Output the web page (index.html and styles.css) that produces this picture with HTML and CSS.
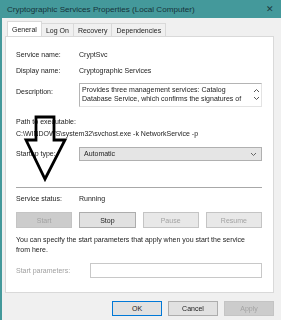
FILE: index.html
```html
<!DOCTYPE html>
<html lang="en">
<head>
  <meta charset="UTF-8" />
  <title>Cryptographic Services Properties</title>
  <link rel="stylesheet" href="styles.css">
</head>
<body>
  <div class="window">
    <div class="titlebar">
      <span class="title">Cryptographic Services Properties (Local Computer)</span>
      <span class="close">&#x2715;</span>
    </div>

    <div class="content">
      <div class="tabs">
        <div class="tab active">General</div>
        <div class="tab">Log On</div>
        <div class="tab">Recovery</div>
        <div class="tab">Dependencies</div>
      </div>

      <div class="panel">
        <div class="row r-name">
          <span class="label">Service name:</span>
          <span class="value">CryptSvc</span>
        </div>
        <div class="row r-display">
          <span class="label">Display name:</span>
          <span class="value">Cryptographic Services</span>
        </div>
        <div class="row r-desc">
          <span class="label desc-label">Description:</span>
          <div class="desc-box">
            <div class="desc-text">Provides three management services: Catalog<br>Database Service, which confirms the signatures of</div>
            <div class="scroll">
              <svg width="7" height="5" viewBox="0 0 7 5"><path d="M1 4 L3.5 1.5 L6 4" fill="none" stroke="#555" stroke-width="1"/></svg>
              <svg width="7" height="5" viewBox="0 0 7 5"><path d="M1 1 L3.5 3.5 L6 1" fill="none" stroke="#555" stroke-width="1"/></svg>
            </div>
          </div>
        </div>
        <div class="path">
          <div class="label">Path to executable:</div>
          <div class="path-value">C:\WINDOWS\system32\svchost.exe -k NetworkService -p</div>
        </div>
        <div class="row r-startup">
          <span class="label">Startup type:</span>
          <div class="select">
            <span>Automatic</span>
            <svg width="7" height="5" viewBox="0 0 7 5"><path d="M1 1 L3.5 3.5 L6 1" fill="none" stroke="#666" stroke-width="1"/></svg>
          </div>
        </div>
        <div class="separator"></div>
        <div class="row r-status">
          <span class="label">Service status:</span>
          <span class="value">Running</span>
        </div>
        <div class="svc-buttons">
          <button class="btn disabled filled">Start</button>
          <button class="btn">Stop</button>
          <button class="btn disabled">Pause</button>
          <button class="btn disabled">Resume</button>
        </div>
        <p class="hint">You can specify the start parameters that apply when you start the service<br>from here.</p>
        <div class="row r-params">
          <span class="label muted">Start parameters:</span>
          <div class="input"></div>
        </div>
      </div>

      <div class="footer">
        <button class="btn wide default">OK</button>
        <button class="btn wide">Cancel</button>
        <button class="btn wide disabled filled">Apply</button>
      </div>
    </div>

    <svg class="arrow" width="70" height="190" viewBox="0 0 70 190">
      <path d="M34 117 L52 117 L52 140 L63 140 L43 179 L24 140 L34 140 Z" fill="none" stroke="#000" stroke-width="2.8" stroke-linejoin="miter"/>
    </svg>
  </div>
</body>
</html>
```

FILE: styles.css
```css
:root {
  --teal: #44999b;
  --tekst: #1c1c1c;
  --graa: #f0f0f0;
  --kant: #d9d9d9;
}

body {
  margin: 0;
  font-family: "Liberation Sans", Arial, sans-serif;
  font-size: 7px;
  color: var(--tekst);
  background-color: var(--graa);
}

.window {
  position: relative;
  width: 281px;
  height: 320px;
  overflow: hidden;
  border-left: 2px solid var(--teal);
  box-sizing: border-box;
}

.titlebar {
  height: 18px;
  background-color: var(--teal);
  display: flex;
  align-items: center;
  justify-content: space-between;
  padding: 0 7px 0 5px;
}

.title {
  font-size: 8.1px;
  color: #16333a;
}

.close {
  font-size: 9px;
  color: #1d3a3e;
}

.content {
  padding: 3px 7px 0 3px;
}

/* graa kantutjaevning af den lille tekst */
.tabs,
.panel,
.footer .btn:not(.default) {
  filter: grayscale(1);
}

.tabs {
  display: flex;
  height: 15px;
  align-items: flex-end;
  padding-left: 2px;
}

.tab {
  height: 13px;
  line-height: 13px;
  padding: 0 4px;
  border: 1px solid var(--kant);
  border-bottom: none;
  margin-right: -1px;
  box-sizing: border-box;
}

.tab.active {
  background-color: #fff;
  position: relative;
  z-index: 1;
  margin-bottom: -1px;
  height: 16px;
  line-height: 16px;
}

.panel {
  background-color: #fff;
  border: 1px solid var(--kant);
  height: 257px;
  box-sizing: border-box;
  padding: 13px 11px 0 10px;
}

.row {
  display: flex;
  align-items: center;
  line-height: 10px;
}

.label {
  width: 63px;
  flex-shrink: 0;
}

.r-display {
  margin-top: 6px;
}

.r-desc {
  margin-top: 7px;
  align-items: flex-start;
}

.desc-label {
  padding-top: 4px;
}

.desc-box {
  flex: 1;
  height: 24px;
  border: 1px solid #b4b4b4;
  border-right-color: #e3e3e3;
  border-bottom-color: #e3e3e3;
  display: flex;
  box-sizing: border-box;
}

.desc-text {
  flex: 1;
  padding: 1px 2px;
  line-height: 9px;
}

.scroll {
  width: 9px;
  display: flex;
  flex-direction: column;
  align-items: center;
  gap: 3px;
  padding-top: 4px;
}

.path {
  margin-top: 9px;
  line-height: 12px;
}

.path-value {
  line-height: 12px;
}

.r-startup {
  margin-top: 7px;
}

.select {
  flex: 1;
  height: 14px;
  background-color: #e5e5e5;
  border: 1px solid #b0b0b0;
  box-sizing: border-box;
  display: flex;
  align-items: center;
  justify-content: space-between;
  padding: 0 4px 0 4px;
}

.separator {
  height: 1px;
  background-color: #a8a8a8;
  margin-top: 26px;
}

.r-status {
  margin-top: 6px;
}

.svc-buttons {
  display: flex;
  gap: 7px;
  margin-top: 8px;
}

.btn {
  font-family: inherit;
  font-size: 7px;
  color: var(--tekst);
  background-color: #e1e1e1;
  border: 1px solid #adadad;
  height: 16px;
  padding: 0;
  margin: 0;
  flex: 1;
}

.btn.disabled {
  color: #a3a3a3;
  border-color: #c4c4c4;
  background-color: #e8e8e8;
}

.btn.filled {
  background-color: #cccccc;
  border-color: #c4c4c4;
}

.hint {
  margin: 7px 0 0;
  line-height: 10px;
}

.r-params {
  margin-top: 8px;
}

.muted {
  color: #a0a0a0;
  width: 74px;
}

.input {
  flex: 1;
  height: 15px;
  border: 1px solid #c8c8c8;
  box-sizing: border-box;
}

.footer {
  display: flex;
  justify-content: flex-end;
  gap: 6px;
  margin-top: 8px;
}

.btn.wide {
  flex: none;
  width: 50px;
  height: 15px;
}

.btn.default {
  border-color: #0078d7;
}

.arrow {
  position: absolute;
  left: 0;
  top: 0;
}
```
